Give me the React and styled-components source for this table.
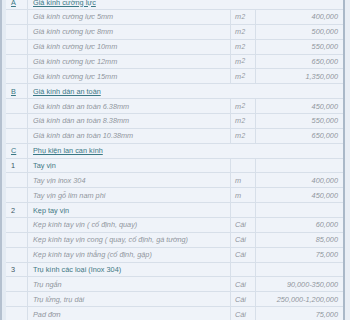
import React from "react";
import styled, { createGlobalStyle } from "styled-components";

const Global = createGlobalStyle`
  html, body { margin: 0; padding: 0; background: #ffffff; overflow: hidden; }
  body { font-family: "Liberation Sans", Arial, sans-serif; }
`;

const Page = styled.div`
  width: 350px;
  height: 320px;
  overflow: hidden;
  display: flex;
  background: #f3f6fa;
`;

const LeftEdge = styled.div`
  width: 6px;
  flex: none;
  background: #e4ebf3;
  border-left: 2px solid #b4c0cf;
  box-sizing: border-box;
`;

const RightEdge = styled.div`
  width: 7px;
  flex: none;
  background: #e9eef5;
  border-left: 2px solid #aab8c8;
  box-sizing: border-box;
`;

const Table = styled.div`
  flex: 1;
  display: flex;
  flex-direction: column;
  margin-top: -4.9px;
  background: #eff3f9;
`;

const Row = styled.div`
  display: grid;
  grid-template-columns: 21px 203px 25px 1fr;
  height: 14.86px;
  box-sizing: border-box;
  border-bottom: 1px solid #d7dfe9;
  flex: none;
`;

const Cell = styled.div`
  border-left: ${(p) => (p.$first ? "none" : "1px solid #d7dfe9")};
  grid-column: ${(p) => (p.$span ? "2 / 5" : "auto")};
  display: flex;
  align-items: center;
  justify-content: ${(p) => (p.$right ? "flex-end" : "flex-start")};
  padding: 0 ${(p) => (p.$right ? "5px" : "0")} 0 ${(p) => (p.$right ? "0" : p.$pad || "5px")};
  font-size: 7.3px;
  white-space: nowrap;
  overflow: hidden;
  color: ${(p) =>
    p.$tone === "link" ? "#3a7885" : p.$tone === "group" ? "#3f7884" : p.$tone === "num" ? "#3b5563" : "#90969d"};
  font-style: ${(p) => (p.$italic ? "italic" : "normal")};
  text-decoration: ${(p) => (p.$underline ? "underline" : "none")};
`;

const Sup = styled.sup`
  font-size: 6.6px;
  line-height: 0;
  vertical-align: 3.5px;
  margin-left: 0.3px;
`;

const M2 = () => (
  <>
    m<Sup>2</Sup>
  </>
);

const data = [
  { type: "section", code: "A", name: "Giá kính cường lực" },
  { type: "item", name: "Giá kính cường lực 5mm", unit: "m2", price: "400,000" },
  { type: "item", name: "Giá kính cường lực 8mm", unit: "m2", price: "500,000" },
  { type: "item", name: "Giá kính cường lực 10mm", unit: "m2", price: "550,000" },
  { type: "item", name: "Giá kính cường lực 12mm", unit: "m2", price: "650,000" },
  { type: "item", name: "Giá kính cường lực 15mm", unit: "m2", price: "1,350,000" },
  { type: "section", code: "B", name: "Giá kính dán an toàn" },
  { type: "item", name: "Giá kính dán an toàn 6.38mm", unit: "m2", price: "450,000" },
  { type: "item", name: "Giá kính dán an toàn 8.38mm", unit: "m2", price: "550,000" },
  { type: "item", name: "Giá kính dán an toàn 10.38mm", unit: "m2", price: "650,000" },
  { type: "section", code: "C", name: "Phụ kiện lan can kính" },
  { type: "group", code: "1", name: "Tay vịn" },
  { type: "item", name: "Tay vịn inox 304", unit: "m", price: "400,000" },
  { type: "item", name: "Tay vịn gỗ lim nam phi", unit: "m", price: "450,000" },
  { type: "group", code: "2", name: "Kẹp tay vịn" },
  { type: "item", name: "Kẹp kính tay vịn ( cố định, quay)", unit: "Cái", price: "60,000" },
  { type: "item", name: "Kẹp kính tay vịn cong ( quay, cố định, gá tường)", unit: "Cái", price: "85,000" },
  { type: "item", name: "Kẹp kính tay vịn thẳng (cố định, gập)", unit: "Cái", price: "75,000" },
  { type: "group", code: "3", name: "Trụ kính các loại (Inox 304)" },
  { type: "item", name: "Trụ ngắn", unit: "Cái", price: "90,000-350,000" },
  { type: "item", name: "Trụ lửng, trụ dài", unit: "Cái", price: "250,000-1,200,000" },
  { type: "item", name: "Pad đơn", unit: "Cái", price: "75,000" },
];

export default function App() {
  return (
    <>
      <Global />
      <Page>
        <LeftEdge />
        <Table>
          {data.map((r, i) => {
            if (r.type === "section") {
              return (
                <Row key={i}>
                  <Cell $first $tone="link" $underline>{r.code}</Cell>
                  <Cell $span $tone="link" $underline>{r.name}</Cell>
                </Row>
              );
            }
            if (r.type === "group") {
              return (
                <Row key={i}>
                  <Cell $first $tone="num">{r.code}</Cell>
                  <Cell $tone="group">{r.name}</Cell>
                  <Cell />
                  <Cell />
                </Row>
              );
            }
            return (
              <Row key={i}>
                <Cell $first />
                <Cell $italic>{r.name}</Cell>
                <Cell $italic $pad="4px">{r.unit === "m2" ? <M2 /> : r.unit}</Cell>
                <Cell $italic $right>{r.price}</Cell>
              </Row>
            );
          })}
        </Table>
        <RightEdge />
      </Page>
    </>
  );
}
